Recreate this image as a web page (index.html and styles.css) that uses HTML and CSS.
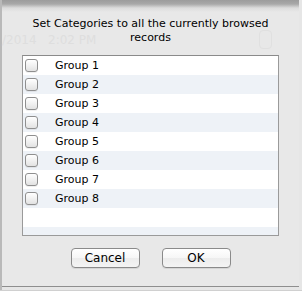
FILE: index.html
```html
<!DOCTYPE html>
<html lang="en">
  <head>
    <meta charset="UTF-8" />
    <meta name="viewport" content="width=device-width, initial-scale=1.0" />
    <title>Set Categories</title>
    <link rel="stylesheet" href="styles.css">
  </head>

  <body>
    <div class="window">
      <!-- Sheet dialog -->
      <div class="sheet">
        <!-- faint window content showing through the sheet -->
        <span class="ghost-date">/2014&nbsp;&nbsp;&nbsp;2:02 PM</span>
        <span class="ghost-stepper"></span>

        <div class="sheet-title">
          <span class="title-line">Set Categories to all the currently browsed</span>
          <span class="title-line">records</span>
        </div>

        <div class="group-list">
          <label class="group-row"><span class="check"></span>Group 1</label>
          <label class="group-row"><span class="check"></span>Group 2</label>
          <label class="group-row"><span class="check"></span>Group 3</label>
          <label class="group-row"><span class="check"></span>Group 4</label>
          <label class="group-row"><span class="check"></span>Group 5</label>
          <label class="group-row"><span class="check"></span>Group 6</label>
          <label class="group-row"><span class="check"></span>Group 7</label>
          <label class="group-row"><span class="check"></span>Group 8</label>
          <div class="group-row"></div>
          <div class="group-row"></div>
        </div>

        <div class="sheet-buttons">
          <button class="push-button">Cancel</button>
          <button class="push-button">OK</button>
        </div>
      </div>
    </div>
  </body>
</html>
```

FILE: styles.css
```css
html,
body {
  margin: 0;
  padding: 0;
}

body {
  width: 302px;
  height: 291px;
  overflow: hidden;
  background-color: #e2e2e2;
  font-family: "DejaVu Sans", sans-serif;
}

.window {
  height: 291px;
  background: linear-gradient(to right, #b9b9b9 0, #b9b9b9 2px, #e6e6e6 2px);
  border-bottom: 1px solid #d0d0d0;
  box-sizing: border-box;
}

/* Sheet */
.sheet {
  position: relative;
  margin-left: 2px;
  width: 297px;
  height: 287px;
  box-sizing: border-box;
  background: linear-gradient(to bottom, #9c9c9c 0, #a8a8a8 4px, #dcdcdc 8px, #e8e8e8 12px);
  border-bottom: 1px solid #8e8e8e;
  display: flex;
  flex-direction: column;
  align-items: center;
}

.ghost-date {
  position: absolute;
  left: 0;
  top: 34px;
  font-size: 12px;
  line-height: 12px;
  color: #dedede;
  white-space: nowrap;
}

.ghost-stepper {
  position: absolute;
  left: 257px;
  top: 30px;
  width: 11px;
  height: 17px;
  border-radius: 4px;
  border: 1px solid #e0e0e0;
}

.sheet-title {
  position: relative;
  margin-top: 17px;
  font-size: 11px;
  line-height: 14px;
  text-align: center;
  color: #000;
}

.title-line {
  display: block;
  width: fit-content;
  margin: 0 auto;
}

.group-list {
  margin-top: 10px;
  width: 257px;
  height: 181px;
  box-sizing: border-box;
  border: 1px solid #9a9a9a;
  border-top-color: #8a8a8a;
  background-color: #fff;
  overflow: hidden;
}

.group-row {
  display: flex;
  align-items: center;
  height: 19px;
  padding-left: 2px;
  font-size: 11px;
  color: #000;
}

.group-row:nth-child(even) {
  background-color: #eef2f7;
}

.check {
  width: 13px;
  height: 13px;
  margin-right: 17px;
  box-sizing: border-box;
  border: 1px solid #8f8f8f;
  border-radius: 3px;
  background: linear-gradient(to bottom, #ffffff, #f1f1f1 50%, #e2e2e2);
  box-shadow: 0 1px 0 rgba(0, 0, 0, 0.06);
}

.sheet-buttons {
  display: flex;
  gap: 22px;
  margin-top: 12px;
}

.push-button {
  width: 69px;
  height: 20px;
  padding: 0;
  box-sizing: border-box;
  border: 1px solid #8a8a8a;
  border-radius: 4px;
  background: linear-gradient(to bottom, #ffffff, #f6f6f6 50%, #ececec 51%, #f4f4f4);
  box-shadow: 0 1px 0 rgba(0, 0, 0, 0.08);
  font-family: "DejaVu Sans", sans-serif;
  font-size: 12px;
  color: #000;
}
```
